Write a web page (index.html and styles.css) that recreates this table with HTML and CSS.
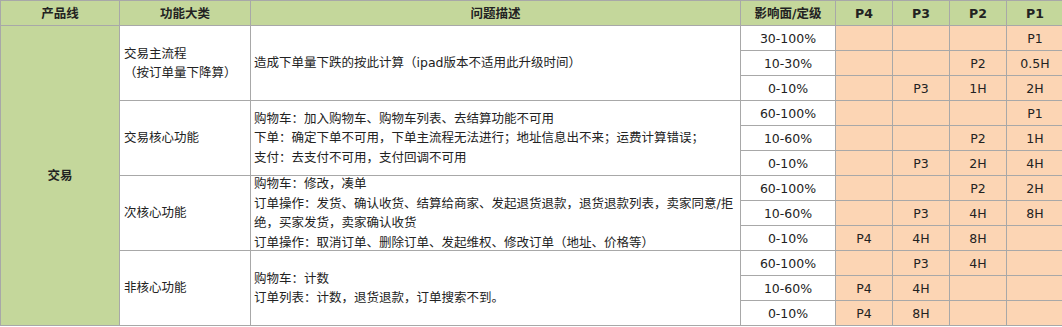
FILE: index.html
```html
<!DOCTYPE html>
<html lang="zh-CN">
<head>
<meta charset="utf-8">
<title>故障定级表</title>
<link rel="stylesheet" href="styles.css">
</head>
<body>
<div class="sheet">
  <div class="cell head">产品线</div>
  <div class="cell head">功能大类</div>
  <div class="cell head">问题描述</div>
  <div class="cell head">影响面/定级</div>
  <div class="cell head">P4</div>
  <div class="cell head">P3</div>
  <div class="cell head">P2</div>
  <div class="cell head">P1</div>

  <div class="cell product">交易</div>

  <div class="cell cat">交易主流程<br>（按订单量下降算）</div>
  <div class="cell desc">造成下单量下跌的按此计算（ipad版本不适用此升级时间）</div>
  <div class="cell scope">30-100%</div><div class="cell lv"></div><div class="cell lv"></div><div class="cell lv"></div><div class="cell lv">P1</div>
  <div class="cell scope">10-30%</div><div class="cell lv"></div><div class="cell lv"></div><div class="cell lv">P2</div><div class="cell lv">0.5H</div>
  <div class="cell scope">0-10%</div><div class="cell lv"></div><div class="cell lv">P3</div><div class="cell lv">1H</div><div class="cell lv">2H</div>

  <div class="cell cat">交易核心功能</div>
  <div class="cell desc">购物车：加入购物车、购物车列表、去结算功能不可用<br>下单：确定下单不可用，下单主流程无法进行；地址信息出不来；运费计算错误；<br>支付：去支付不可用，支付回调不可用</div>
  <div class="cell scope">60-100%</div><div class="cell lv"></div><div class="cell lv"></div><div class="cell lv"></div><div class="cell lv">P1</div>
  <div class="cell scope">10-60%</div><div class="cell lv"></div><div class="cell lv"></div><div class="cell lv">P2</div><div class="cell lv">1H</div>
  <div class="cell scope">0-10%</div><div class="cell lv"></div><div class="cell lv">P3</div><div class="cell lv">2H</div><div class="cell lv">4H</div>

  <div class="cell cat">次核心功能</div>
  <div class="cell desc">购物车：修改，凑单<br>订单操作：发货、确认收货、结算给商家、发起退货退款，退货退款列表，卖家同意/拒<br>绝，买家发货，卖家确认收货<br>订单操作：取消订单、删除订单、发起维权、修改订单（地址、价格等）</div>
  <div class="cell scope">60-100%</div><div class="cell lv"></div><div class="cell lv"></div><div class="cell lv">P2</div><div class="cell lv">2H</div>
  <div class="cell scope">10-60%</div><div class="cell lv"></div><div class="cell lv">P3</div><div class="cell lv">4H</div><div class="cell lv">8H</div>
  <div class="cell scope">0-10%</div><div class="cell lv">P4</div><div class="cell lv">4H</div><div class="cell lv">8H</div><div class="cell lv"></div>

  <div class="cell cat">非核心功能</div>
  <div class="cell desc">购物车：计数<br>订单列表：计数，退货退款，订单搜索不到。</div>
  <div class="cell scope">60-100%</div><div class="cell lv"></div><div class="cell lv">P3</div><div class="cell lv">4H</div><div class="cell lv"></div>
  <div class="cell scope">10-60%</div><div class="cell lv">P4</div><div class="cell lv">4H</div><div class="cell lv"></div><div class="cell lv"></div>
  <div class="cell scope">0-10%</div><div class="cell lv">P4</div><div class="cell lv">8H</div><div class="cell lv"></div><div class="cell lv"></div>
</div>
</body>
</html>
```
FILE: styles.css
```css
html, body {
  margin: 0;
  padding: 0;
  background: #ffffff;
}

body {
  font-family: "DejaVu Sans", "Noto Sans CJK SC", sans-serif;
  font-size: 12.5px;
  color: #222222;
  overflow: hidden;
}

.sheet {
  display: grid;
  grid-template-columns: 118px 130px 489px 94px 56px 56px 56px 56px;
  grid-template-rows: repeat(13, 24px);
  gap: 1px;
  padding: 1px;
  background: #a8a8a8;
  width: max-content;
}

.cell {
  display: flex;
  align-items: center;
  background: #ffffff;
  line-height: 19.5px;
  white-space: nowrap;
  min-width: 0;
}

.head {
  background: #c4d79b;
  font-weight: bold;
  justify-content: center;
  padding-top: 2px;
}

.product {
  grid-row: span 12;
  background: #c4d79b;
  font-weight: bold;
  justify-content: center;
}

.cat {
  grid-row: span 3;
  padding-left: 4px;
}

.desc {
  grid-row: span 3;
  padding-left: 3px;
}

.scope {
  justify-content: center;
  padding-top: 2px;
}

.lv {
  background: #fcd5b4;
  justify-content: center;
  padding-top: 2px;
}
```
